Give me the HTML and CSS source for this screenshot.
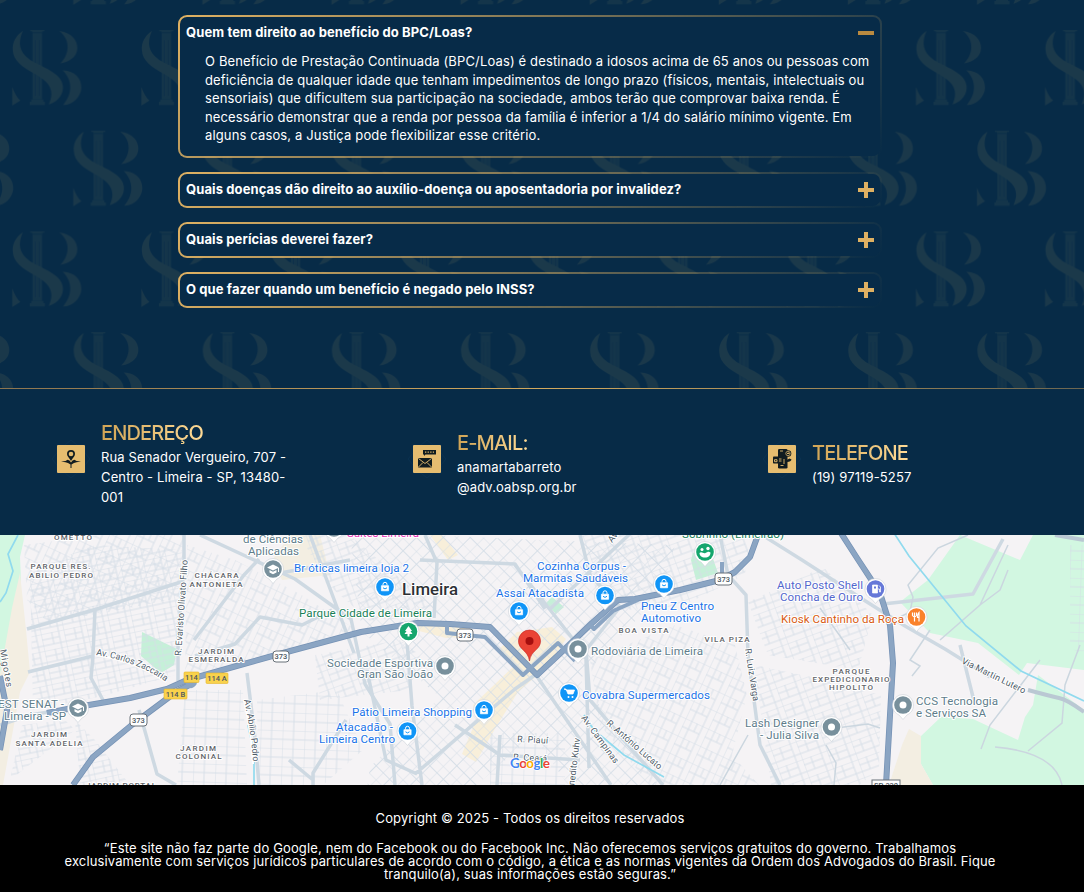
FILE: index.html
```html
<!DOCTYPE html>
<html lang="pt-BR">
<head>
<meta charset="utf-8">
<title>Perguntas frequentes</title>
<link rel="stylesheet" href="styles.css">
</head>
<body>
<section class="faq-section">
  <svg class="backdrop" aria-hidden="true">
    <defs>
      <g id="monogram">
        <path d="M18 0h14v1.200h-2v1.300H20V1.200h-2zM20.300 3.200h9.400v66h-9.400zM19 69.500h12v2.200h1.500V75h-15v-3.300h1.500z" fill="#14354a"/>
        <path d="M23 10v56M27 10v56" stroke="#0c2e48" stroke-width=".7"/>
        <path d="M10.500 1C3 6 0 13 .5 20 1 31 10 37 22 43.500 35 50.500 44 59 36.500 74.500 47 71 51.500 63 50.500 55.500 49 45 36 39.500 25 34 11 27 3 18 10.500 1Z" fill="#1b394a"/>
        <path d="M47 1c13 2 18 9.500 18 17 0 9-8 14-17 15.500C57 25 59 10 47 1ZM50.500 40.500C63 41 69 49 69 57.500S61 75 51 75C61 63 60 50 50.500 40.500ZM0 57c2 6 5 11 8 13.500L0 75.500Z" fill="#1a384a"/>
      </g>
      <pattern id="monograms" x="0" y="-70.700" width="129.100" height="201.400" patternUnits="userSpaceOnUse">
        <use href="#monogram" x="73.300" y="0"/>
        <use href="#monogram" x="-55.800" y="0"/>
        <use href="#monogram" x="12.300" y="100.700"/>
      </pattern>
    </defs>
    <rect width="100%" height="100%" fill="url(#monograms)"/>
  </svg>
  <div class="faq-list">
    <article class="faq-item">
      <h3 class="question">Quem tem direito ao benefício do BPC/Loas?<span class="toggle toggle-open"></span></h3>
      <p class="answer">O Benefício de Prestação Continuada (BPC/Loas) é destinado a idosos acima de 65 anos ou pessoas com<br>deficiência de qualquer idade que tenham impedimentos de longo prazo (físicos, mentais, intelectuais ou<br>sensoriais) que dificultem sua participação na sociedade, ambos terão que comprovar baixa renda. É<br>necessário demonstrar que a renda por pessoa da família é inferior a 1/4 do salário mínimo vigente. Em<br>alguns casos, a Justiça pode flexibilizar esse critério.</p>
    </article>
    <article class="faq-item"><h3 class="question">Quais doenças dão direito ao auxílio-doença ou aposentadoria por invalidez?<span class="toggle"></span></h3></article>
    <article class="faq-item"><h3 class="question">Quais perícias deverei fazer?<span class="toggle"></span></h3></article>
    <article class="faq-item"><h3 class="question">O que fazer quando um benefício é negado pelo INSS?<span class="toggle"></span></h3></article>
  </div>
</section>

<section class="contacts">
  <div class="contact">
    <svg class="contact-icon" viewBox="0 0 40 40">
      <path class="diamond" d="M20 1 26 6h8v8l5 6-5 6v8h-8l-6 5-6-5H6v-8l-5-6 5-6V6h8z"/>
      <rect class="tile" x="6" y="6" width="28" height="28" rx="1"/>
      <path d="M20 22c-1.500-3-4-4.500-4-7a4 4 0 0 1 8 0c0 2.500-2.500 4-4 7Z"/><circle cx="20" cy="15" r="2.300" fill="#e3ba6d"/>
      <path d="m10 22.600 4.500-.5 2-1.300 2 .7 1.500 2 1.500-2 2-.7 2 1.300 4.500.5-4.500.7-2.500.6-3 1.800-3-1.800-2.500-.6zM19.500 25h1v4h-1z"/>
    </svg>
    <div><h2 class="contact-title">ENDEREÇO</h2><p class="contact-text">Rua Senador Vergueiro, 707 -<br>Centro - Limeira - SP, 13480-<br>001</p></div>
  </div>
  <div class="contact">
    <svg class="contact-icon" viewBox="0 0 40 40">
      <path class="diamond" d="M20 1 26 6h8v8l5 6-5 6v8h-8l-6 5-6-5H6v-8l-5-6 5-6V6h8z"/>
      <rect class="tile" x="6" y="6" width="28" height="28" rx="1"/>
      <path d="M16 11h13v4.500H18.500L17 17v-1.500h-1z"/><rect x="11" y="19" width="14" height="9.500" rx=".7"/>
      <path d="m11.500 19.500 6.500 5 6.500-5M11.500 28l4.500-4.500M24.500 28 20 23.500" fill="none" stroke="#e7be70" stroke-width=".9"/>
      <path d="M18 13.200h9" stroke="#e0b668" stroke-width="1.300" stroke-dasharray="1.300 1.300"/>
    </svg>
    <div><h2 class="contact-title">E-MAIL:</h2><p class="contact-text">anamartabarreto<br>@adv.oabsp.org.br</p></div>
  </div>
  <div class="contact">
    <svg class="contact-icon" viewBox="0 0 40 40">
      <path class="diamond" d="M20 1 26 6h8v8l5 6-5 6v8h-8l-6 5-6-5H6v-8l-5-6 5-6V6h8z"/>
      <rect class="tile" x="6" y="6" width="28" height="28" rx="1"/>
      <rect x="16" y="10" width="9.500" height="19.500" rx="1.300"/><circle cx="26" cy="14.500" r="3.300"/><circle cx="26" cy="14.500" r="2.200" fill="none" stroke="#e5bd70" stroke-width=".7"/><rect x="11" y="17.500" width="10.500" height="7" rx=".8"/>
      <path d="M25 23c3 0 4-1 4.500-2.500l-2-1-3 1.500z"/>
      <path d="M25 14.500h2.300l-1-1M12.500 22.700v-2h2.500v2zM17 20h2.500M17 22h2.500M18.500 26.500h3M22 20v5M18 12h3" fill="none" stroke="#e5bd70" stroke-width=".9"/>
    </svg>
    <div><h2 class="contact-title">TELEFONE</h2><p class="contact-text">(19) 97119-5257</p></div>
  </div>
</section>

<svg class="map" viewBox="0 535 1084 250" role="img" aria-label="Mapa de Limeira">
  <defs>
    <pattern id="streetsA" width="23" height="17" patternUnits="userSpaceOnUse" patternTransform="rotate(-12)"><path class="street" d="M0 0H23M0 6H18M0 12H23M0 0V17M11 0v12M18 0v17"/></pattern>
    <pattern id="streetsB" width="25" height="19" patternUnits="userSpaceOnUse" patternTransform="rotate(25)"><path class="street" d="M0 0H25M0 9H19M0 0V19M7 0v19M13 0v9M19 0v19"/></pattern>
    <pattern id="streetsC" width="19" height="19" patternUnits="userSpaceOnUse" patternTransform="rotate(45)"><path class="street" d="M0 0H19M0 9.500H19M0 0V19M9.500 0V19"/></pattern>
    <pattern id="streetsD" width="26" height="19" patternUnits="userSpaceOnUse" patternTransform="rotate(-20)"><path class="street" d="M0 0H26M0 6H20M0 13H26M0 0V19M9 0v13M20 0v19"/></pattern>
    <pattern id="streetsE" width="22" height="18" patternUnits="userSpaceOnUse" patternTransform="rotate(2)"><path class="street" d="M0 0H22M0 9H22M0 0V18M11 0v18"/></pattern>
    <symbol id="pin" viewBox="-12 -12 24 28" overflow="visible"><path d="M0 14.500-4 10C-8 8-10.500 5-10.500 0a10.500 10.500 0 0 1 21 0C10.500 5 8 8 4 10Z" fill="#fff" stroke="#cbd0d6" stroke-width=".6"/><circle r="8.800" fill="currentColor"/></symbol>
    <g id="dot"><use href="#pin" x="-12" y="-12" width="24" height="28"/><circle r="3.500" fill="#fff"/></g>
    <g id="bag"><use href="#pin" x="-12" y="-12" width="24" height="28"/><path d="M-3.600-1.300h7.200V3.800h-7.200z" fill="#fff" stroke="#fff" stroke-width=".7"/><path d="M-2-1.500v-1.200a2 2 0 0 1 4 0v1.200" fill="none" stroke="#fff"/><path d="M-2 .8Q0 3 2 .8" fill="none" stroke="#1095f7"/></g>
    <g id="cap"><use href="#pin" x="-12" y="-12" width="24" height="28"/><path d="m-6-1.500 6-3 6 3-6 3zM-3.500 1v2.500L0 5.200l3.500-1.700V1L0 2.700zM5-1h1v4H5z" fill="#fff"/></g>
  </defs>
  <rect x="0" y="535" width="1084" height="250" fill="#f5f3f5"/>

  <path fill="#d2f7e1" d="M0 535H25L20 557l1 23-8 30L0 675z"/>
  <path fill="#f3eee2" d="M20 573 26 630l4 42-10 20L3 785H0V675l12-67zM290 535h30l10 40-48 5-10-20z"/>
  <path fill="#c5f0d8" d="m142 632 35 17-3 16-13 8-20-17z"/>
  <path fill="#d2f7e1" d="m960 535 60 25 13-25h51v135l-57-7-8 12-41-32-48-10-30-31 28-22z"/>
  <path fill="#d2f7e1" d="m1038 675 46 35v75H933l-12-21v-28l20-19 32 2 30 14 15 7 7-23 8-12z"/>
  <path fill="#f3eee2" d="m909 729 12 7v28l12 21h-44l13-40z"/>
  <path fill="#c5f0d8" d="M693 553h18l7 20-22 7-5-20zM546 603l6-6 12 10-8 7z"/>
  <path fill="#f8efda" d="m552 627 14 12-18 27-30 26-22 35-20 35-14-8 15-36-4-13 42-40-18-14 20-19zM418 622h38l20 14-30 2-27-7zM430 535h12l16 20-10 5z"/>

  <path fill="url(#streetsA)" d="M30 570 95 545l87 5-7 125-72 21-70 14zM22 725l43-5 10 10-65 50zM75 720l20 20 35 45H80z"/>
  <path fill="url(#streetsB)" d="M24 545 100 535h84v62l-75 15-62 10-20-22zM187 545l48 15 65 34 55 35-110 34-60 20z"/>
  <path fill="url(#streetsE)" d="M185 690h58l4 95h-70zM257 700l80-10 26 60-40 35h-65zM490 733h75v52h-75zM1070 545h14v110l-14-7z"/>
  <path fill="url(#streetsC)" d="M350 535h80l110 5 135 5-15 50-80 84 78 106h-90l-35-50-33 30-70 60h-68l8-58 70-70-78-65z"/>
  <path fill="url(#streetsB)" d="M590 660 675 625l60 20 12 50-15 60 27 30H650l-50-60z"/>
  <path fill="url(#streetsD)" d="M300 535h50l60 52 30 27-70 7-44-38zM580 535h170l-5 40-65 32-75 4-12-30zM748 602l75-35 50 48-15 55-90-15zM754 665l72 15 55 15-2 75-20 15h-88zM315 655l85-15 20 15-10 35-90 10z"/>

  <g class="arterial">
    <path d="M184 535v31l-6 70v45M27 629l70-20 87-28M28 672l65-16-2 22 12 22M95 610l-2 45M0 725l30-10 50-8M200 535l95 44 56 40 14 65 25 40 5 61M310 535l44 118M350 560l-75 14M195 656l40-12 25-27 42 8 30-15M194 640l50-65 15-16M247 673l8 65 4 47M139 710l18 64 19 11M346 720l-33 53v12M313 780l-24-20"/>
    <path d="m425 535 12 28-3 55M549 610l85-80M535 675l-20 14-100 85M420 560l95 4 30 45M407 641l5 65 10 79M367 670l19 90 31 14M580 535l10 40 30 32-34 43 4 50 38 45 35 40M536 675l75 110M570 648l16 10 3 110M515 565l65 83M455 725l45 30 80 5M500 735l-3 50"/>
    <path d="M720 535l8 40 18 20 2 60 12 90 20 40M762 535l40 25 65 42 38 24 40 23 45 28M883 604l90-10 30-55M960 645l15 60"/>
  </g>
  <g class="lane">
    <path d="M890 622l20-10 3-15-5-12 30-37 30-13M1008 545l-28 60-40 35M930 630l-20 30 10 6-8 10M1040 660l-50 65-9 24M995 747q60 5 67 38M1080 645l-15 40-3 38-34 28M980 605l20-15 8-20M720 785l28-50M828 729l40-5 12 4M826 745l10 18-2 22M850 650l-30-42"/>
  </g>
  <path d="M18 535 8 554l5 17-7 22-6 9M248 725l6 28v32M584 715l10 15 30 25 40 22M892 530l17 26 57 70 55 45 63 30" class="river"/>
  <g class="highway-edge"><path id="hwyMain" d="M47 713 83 706 130 698 167 689 187 680 233 667 283 653 361 632 417 623 450 624 490 627 537 675 567 647 592 623 618 600 635 599 680 590 720 580 735 572 750 557 758 535"/><path id="hwySouth" d="M195 682 176 692l-43 32-40 33-20 28"/><path id="hwyEast" d="M839 530 857 558 880 593 890 625 893 663 890 715 886 785"/><path id="hwyWest" d="M0 676 7 710 0 750"/></g>
  <g class="highway"><use href="#hwyMain"/><use href="#hwySouth"/><use href="#hwyEast"/><use href="#hwyWest"/></g>
  <path class="avenue" d="M447 624v9l38 4 38 38 35-32 17 18M590 625l4 4 19-18 25-11M722 579v-17M187 682q5 10 10-4"/>
  <path d="M1028 690q22 6 31 8t25 14M1055 535l29 5" fill="none" stroke="#bac8d3" stroke-width="4"/>

  <g class="shield"><rect x="273" y="651" width="16" height="11" rx="3"/><rect x="130" y="714" width="17" height="12" rx="3"/><rect x="457" y="629" width="16" height="12" rx="3"/><rect x="715" y="573" width="17" height="12" rx="3"/><rect x="872" y="780" width="28" height="12"/></g>
  <g fill="#f9d24c" stroke="#e5b62a" stroke-width=".6"><rect x="184" y="672" width="15" height="10.500" rx="1"/><rect x="206" y="673" width="22" height="10.500" rx="1"/><rect x="164" y="689" width="23" height="10" rx="1"/></g>
  <g class="road-number"><text x="281" y="659.300">373</text><text x="138.500" y="723">373</text><text x="465" y="638">373</text><text x="723.700" y="582">373</text><text x="191.500" y="680">114</text><text x="217" y="681.200">114 A</text><text x="175.500" y="697">114 B</text><text x="886" y="788" textLength="24">SP-330</text></g>

  <g class="district">
    <text x="73" y="539.500" textLength="38">OMETTO</text><text x="60.500" y="569" textLength="60">PARQUE RES.</text><text x="61" y="577.500" textLength="64">ABILIO PEDRO</text>
    <text x="216.500" y="578" textLength="44">CHÁCARA</text><text x="216" y="586.500" textLength="53">ANTONIETA</text><text x="216" y="653.500" textLength="36">JARDIM</text><text x="216" y="662" textLength="55">ESMERALDA</text>
    <text x="49" y="737" textLength="36">JARDIM</text><text x="49" y="745.500" textLength="67">SANTA ADELIA</text><text x="198" y="750.500" textLength="36">JARDIM</text><text x="198.500" y="759" textLength="46">COLONIAL</text><text x="121" y="788" textLength="70">JARDIM PORTAL</text>
    <text x="643.500" y="633.300" textLength="50">BOA VISTA</text><text x="727" y="641.500" textLength="45">VILA PIZA</text><text x="851" y="673.500" textLength="37">PARQUE</text><text x="851" y="682" textLength="77">EXPEDICIONARIO</text><text x="851" y="690.300" textLength="44">HIPOLITO</text>
  </g>
  <g class="road-name">
    <path id="zaccaria" d="M96 655Q136 661 166 682"/><text><textPath href="#zaccaria" textLength="75">Av. Carlos Zaccaria</textPath></text>
    <text transform="translate(181 656)rotate(-86)" textLength="96">R. Evaristo Olivato Filho</text>
    <path id="abilio" d="M244 700Q252 735 253 764"/><text><textPath href="#abilio" textLength="62">Av. Abílio Pedro</textPath></text>
    <text transform="translate(745 649)rotate(81)" textLength="53">R. Luiz Varga</text>
    <text transform="translate(961 663)rotate(26)" textLength="70">Via Martin Lutero</text>
    <text transform="translate(581 718)rotate(54)" textLength="57">Av. Campinas</text>
    <text transform="translate(606 724)rotate(41)" textLength="70">R. António Lucato</text>
    <text x="517" y="742" textLength="31" transform="rotate(3 517 742)">R. Piauí</text><text x="513" y="760" textLength="34" transform="rotate(3 513 760)">R. Ceará</text>
    <text transform="translate(573 796)rotate(-83)" textLength="58">Benedito Kuhv</text>
    <text transform="translate(0 650)rotate(80)" textLength="38">Migotes</text><text transform="translate(612 543)rotate(-52)">Av.</text>
  </g>
  <g class="place">
    <g fill="#607d8b"><text x="243" y="543" textLength="60">de Ciências</text><text x="248" y="555" textLength="51">Aplicadas</text><text x="-2" y="708" textLength="66">EST SENAT -</text><text x="4" y="719.500" textLength="62">Limeira - SP</text><text x="327" y="666.500" textLength="106">Sociedade Esportiva</text><text x="357" y="678" textLength="76">Gran São João</text><text x="591" y="654.500" textLength="112">Rodoviária de Limeira</text><text x="745" y="727" textLength="74">Lash Designer</text><text x="760" y="738.500" textLength="59">- Julia Silva</text><text x="916" y="705" textLength="82">CCS Tecnologia</text><text x="916" y="716.500" textLength="70">e Serviços SA</text></g>
    <g fill="#1a73e8"><text x="294" y="572" textLength="115">Br óticas limeira loja 2</text><text x="537" y="569.500" textLength="89">Cozinha Corpus -</text><text x="523" y="581.500" textLength="105">Marmitas Saudáveis</text><text x="496" y="597" textLength="88">Assaí Atacadista</text><text x="641" y="610" textLength="73">Pneu Z Centro</text><text x="641" y="621.500" textLength="60">Automotivo</text><text x="582" y="699" textLength="128">Covabra Supermercados</text><text x="352" y="716" textLength="120">Pátio Limeira Shopping</text><text x="336" y="731" textLength="57">Atacadão -</text><text x="319" y="742.500" textLength="76">Limeira Centro</text></g>
    <g fill="#188057"><text x="299" y="617.300" textLength="133">Parque Cidade de Limeira</text><text x="682" y="538" textLength="102">Sobrinho (Limeirão)</text></g>
    <g fill="#5367cd"><text x="777" y="589" textLength="86">Auto Posto Shell</text><text x="780" y="601" textLength="83">Concha de Ouro</text></g>
    <text x="781" y="622.500" textLength="123" fill="#d95b12">Kiosk Cantinho da Roça</text><text x="347" y="537" textLength="72" fill="#e632b5">Suites Limeira</text>
  </g>
  <text class="city" x="402" y="595.300" textLength="56">Limeira</text>

  <g color="#78909c"><use href="#cap" x="273" y="569"/><use href="#cap" x="78" y="708"/><use href="#dot" x="445" y="666"/><use href="#dot" x="578" y="649"/><use href="#dot" x="831.500" y="727"/><use href="#dot" x="903" y="705"/><use href="#dot" x="334" y="528"/></g>
  <g color="#1095f7"><use href="#bag" x="385" y="587"/><use href="#bag" x="519" y="611"/><use href="#bag" x="605" y="595.500"/><use href="#bag" x="664" y="584"/><use href="#bag" x="484" y="710"/><use href="#bag" x="407.500" y="731"/><use href="#pin" x="557" y="681" width="24" height="28"/></g>
  <path d="M564 689h2l2 5h5l1.500-4H566.500z" fill="#fff" stroke="#fff" stroke-width=".8"/><circle cx="568.500" cy="697" r="1" fill="#fff"/><circle cx="572.500" cy="697" r="1" fill="#fff"/>
  <g color="#15a66d"><use href="#pin" x="396.500" y="619.500" width="24" height="28"/><use href="#pin" x="693" y="540" width="24" height="28"/></g>
  <path d="m408.500 626 3.500 5h-1.500l2 3h-3v2.500h-2V634h-3l2-3H405z" fill="#fff"/>
  <path d="M699.500 553c2-2 4 1 6 0s3-2 5-.5c0 3-2 5-5.500 5s-5.500-2-5.500-4.500Z" fill="#fff"/><circle cx="702" cy="549.500" r="1.500" fill="#fff"/><circle cx="708" cy="548.500" r="1.700" fill="#fff"/>
  <g color="#6678d8"><use href="#pin" x="863.500" y="577" width="24" height="28"/></g><path d="M872.500 585h5v8h-5z" fill="#fff" stroke="#fff" stroke-width=".7"/><path d="M878 589h1.500v3h1v-5l-1.500-1.500" fill="none" stroke="#fff" stroke-width=".8"/><path d="M874 586.500h2v2h-2z" fill="#6678d8"/>
  <g color="#fa822b"><use href="#pin" x="904.500" y="605" width="24" height="28"/></g><path d="M912.500 612.500v3q2 3 4 0v-3M914.500 612.500v9M919 621.500v-9q-2 2-1.500 5h1.500" fill="none" stroke="#fff" stroke-width="1.200"/>
  <path d="M529.500 661C528 650 518.500 650 518.500 641a11 11 0 0 1 22 0c0 9-9.500 9-11 20Z" fill="#ea4335" stroke="#c5221f" stroke-width=".6"/><circle cx="529.500" cy="641" r="4" fill="#a50e0e"/>
  <text class="google" x="510" y="767.500" textLength="40"><tspan fill="#4285f4">G</tspan><tspan fill="#ea4335">o</tspan><tspan fill="#f9ab00">o</tspan><tspan fill="#4285f4">g</tspan><tspan fill="#34a853">l</tspan><tspan fill="#ea4335">e</tspan></text>
</svg>

<footer class="footer">
  <p class="copyright">Copyright © 2025 - Todos os direitos reservados</p>
  <p class="disclaimer">“Este site não faz parte do Google, nem do Facebook ou do Facebook Inc. Não oferecemos serviços gratuitos do governo. Trabalhamos<br>exclusivamente com serviços jurídicos particulares de acordo com o código, a ética e as normas vigentes da Ordem dos Advogados do Brasil. Fique<br>tranquilo(a), suas informações estão seguras.”</p>
</footer>
</body>
</html>
```
FILE: styles.css
```css
* { box-sizing: border-box; }
body { margin: 0; width: 1084px; height: 892px; overflow: hidden; background: #000; color: #fff; font-family: Inter, sans-serif; }
h2, h3, p { margin: 0; }

.faq-section { position: relative; height: 388px; padding: 15px 202px 0 178px; background: #072b47; }
.backdrop { position: absolute; inset: 0; width: 100%; height: 100%; }
.faq-list { position: relative; display: flex; flex-direction: column; gap: 14px; }
.faq-item {
  min-height: 36px;
  border: 2px solid transparent;
  border-radius: 9px;
  background: linear-gradient(#072b48, #072b48) padding-box, linear-gradient(135deg, #e0b263, #072b4800) border-box;
}
.question { display: flex; justify-content: space-between; align-items: center; height: 32px; padding: 0 6px 2px; font-size: 13px; font-weight: 700; line-height: 18px; letter-spacing: .11px; white-space: nowrap; }
.toggle { width: 16px; height: 16px; margin-top: 2px; border-radius: 1px; background: linear-gradient(#deb062, #deb062) center / 16px 4px no-repeat, linear-gradient(#deb062, #deb062) center / 4px 16px no-repeat; }
.toggle-open { background: linear-gradient(#b98a40, #b98a40) center / 16px 4px no-repeat; }
.answer { padding: 3px 0 11px 25px; font-size: 13px; line-height: 18.600px; letter-spacing: .14px; white-space: nowrap; }

.contacts { display: grid; grid-template-columns: 356px 355px 1fr; height: 147px; padding-left: 51px; padding-top: 3px; background: #072b47; border-top: 1px solid; border-image: linear-gradient(90deg, #8c7550, #d3aa5e 50%, #6b6651) 1; }
.contact { display: flex; align-items: center; gap: 10px; padding-bottom: 2px; }
.contact-icon { width: 40px; height: 40px; flex: none; margin-bottom: 8px; fill: #101c20; }
.contact-icon .diamond { fill: none; stroke: #0a3150; }
.contact-icon .tile { fill: #e6bd70; }
.contact-title { width: max-content; font-size: 20px; font-weight: 500; line-height: 28px; letter-spacing: -.85px; color: transparent; background: linear-gradient(90deg, #d0a455, #ffdb96); background-clip: text; }
.contact-text { font-size: 13px; line-height: 20px; letter-spacing: .14px; white-space: nowrap; }

.map { display: block; width: 1084px; height: 250px; font-family: Roboto, sans-serif; }
.street { fill: none; stroke: #d5dee6; stroke-width: .9; }
.arterial { fill: none; stroke: #ced9e2; stroke-width: 3.500; stroke-linejoin: round; }
.lane { fill: none; stroke: #cbd6df; stroke-width: 1.500; }
.river { fill: none; stroke: #90daee; stroke-width: 1.700; }
.highway-edge { fill: none; stroke: #7692b5; stroke-width: 6; stroke-linejoin: round; }
.highway { fill: none; stroke: #8ba5c3; stroke-width: 4.500; stroke-linejoin: round; }
.avenue { fill: none; stroke: #8ba5c3; stroke-width: 4; stroke-linejoin: round; }
.shield { fill: #fff; stroke: #687078; }
.road-number { font-size: 7.500px; fill: #4c5660; text-anchor: middle; font-weight: 500; }
.district { font-size: 8px; fill: #616469; text-anchor: middle; font-weight: 500; }
.road-name { font-size: 9px; fill: #4e5b68; }
.road-name path { fill: none; }
.place { font-size: 11.600px; }
.district, .road-name, .place, .city { paint-order: stroke; stroke: #fff; stroke-width: 2px; stroke-linejoin: round; }
.city { font-size: 16.800px; fill: #2c3035; font-weight: 500; }
.google { font-family: Lato, sans-serif; font-size: 13.500px; font-weight: 700; paint-order: stroke; stroke: #fff; stroke-width: 1.500px; }

.footer { height: 107px; padding: 25px 24px 0 0; text-align: center; font-size: 13px; letter-spacing: .135px; background: #000; }
.copyright { line-height: 17px; }
.disclaimer { margin-top: 15px; line-height: 13px; white-space: nowrap; }
```
